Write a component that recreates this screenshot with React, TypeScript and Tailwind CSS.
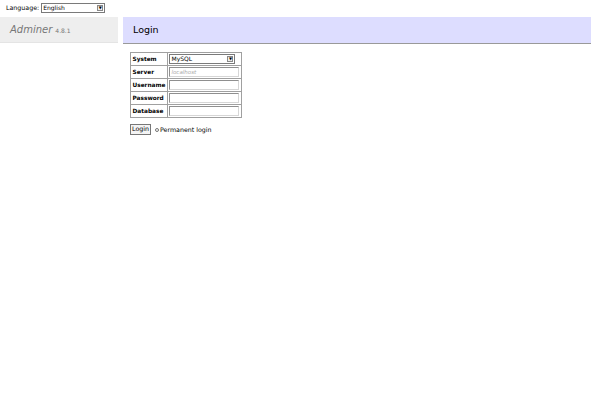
import { useState } from 'react';

const font = { fontFamily: '"DejaVu Sans", Verdana, sans-serif' };

function Row({ label, children }: { label: string; children: React.ReactNode }) {
  return (
    <tr>
      <th className="border border-[#a0a0a0] px-[1.5px] h-[13px] text-left font-bold align-middle text-[5.8px]">
        {label}
      </th>
      <td className="border border-[#a0a0a0] px-[1.5px] h-[13px] align-middle">{children}</td>
    </tr>
  );
}

function TextInput({ placeholder, type = 'text' }: { placeholder?: string; type?: string }) {
  return (
    <input
      type={type}
      placeholder={placeholder}
      className="block w-[70px] h-[10px] border border-[#8f8f8f] border-r-[#d6d6d6] border-b-[#d6d6d6] bg-white px-[1px] text-[5.5px] italic placeholder:text-[#aaa] outline-none"
    />
  );
}

function FakeSelect({ value, width }: { value: string; width: string }) {
  return (
    <div
      className={`flex items-center justify-between h-[10px] border border-[#7a7a7a] bg-white pl-[1px] pr-[1px] ${width}`}
    >
      <span className="text-[6px] leading-none">{value}</span>
      <span className="flex items-center justify-center w-[6px] h-[6px] border border-[#888] bg-[#eee] text-[4px] leading-none">
        ▼
      </span>
    </div>
  );
}

export default function App() {
  const [permanent, setPermanent] = useState(false);

  return (
    <div className="w-[600px] h-[400px] bg-white text-black text-[6.5px]" style={font}>
      <div className="flex items-center gap-[2px] pl-[6px] pt-[2px] h-[17px]">
        <span className="text-[6.3px] -mt-[3px]">Language:</span>
        <div className="-mt-[3px]">
          <FakeSelect value="English" width="w-[64px]" />
        </div>
      </div>

      <div className="flex gap-[5px] pr-[9px]">
        <div className="w-[118px] h-[26px] bg-[#eee] border-b border-[#e4e4e4] flex items-center pl-[10px]">
          <span className="text-[10px] italic text-[#777]">Adminer</span>
          <span className="text-[6px] text-[#777] ml-[3px] mt-[2px]">4.8.1</span>
        </div>

        <div className="flex-1">
          <div className="h-[27px] bg-[#ddf] border-b border-[#999] flex items-center pl-[10px]">
            <span className="text-[9.5px]">Login</span>
          </div>

          <div className="pl-[7px] pt-[8px]">
            <table className="border-collapse border border-[#a0a0a0] text-[6.2px]">
              <tbody>
                <Row label="System">
                  <FakeSelect value="MySQL" width="w-[66px]" />
                </Row>
                <Row label="Server">
                  <TextInput placeholder="localhost" />
                </Row>
                <Row label="Username">
                  <TextInput />
                </Row>
                <Row label="Password">
                  <TextInput type="password" />
                </Row>
                <Row label="Database">
                  <TextInput />
                </Row>
              </tbody>
            </table>

            <div className="flex items-center mt-[6px] gap-[4px]">
              <button className="h-[11px] w-[21px] border border-[#777] bg-[#f4f4f4] text-[6.3px] leading-none">
                Login
              </button>
              <label className="flex items-center gap-[1px] text-[6.3px]">
                <input
                  type="checkbox"
                  checked={permanent}
                  onChange={(e) => setPermanent(e.target.checked)}
                  className="w-[4px] h-[4px] m-0"
                />
                Permanent login
              </label>
            </div>
          </div>
        </div>
      </div>
    </div>
  );
}
